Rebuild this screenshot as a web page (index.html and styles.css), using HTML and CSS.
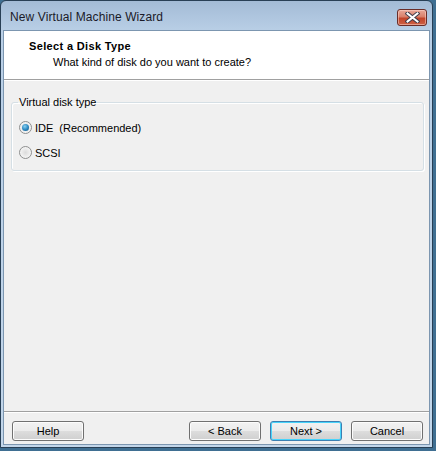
FILE: index.html
```html
<!DOCTYPE html>
<html>
<head>
<meta charset="utf-8">
<link rel="stylesheet" href="styles.css">
</head>
<body>
<div class="window">
  <div class="titlebar">
    <span class="title">New Virtual Machine Wizard</span>
    <div class="close">
      <svg width="15" height="11" viewBox="0 0 15 11">
        <path d="M2.5 1.5 L12.5 9.5 M12.5 1.5 L2.5 9.5" stroke="#3b3b4a" stroke-width="4" stroke-linecap="square"/>
        <path d="M2.5 1.5 L12.5 9.5 M12.5 1.5 L2.5 9.5" stroke="#ffffff" stroke-width="2" stroke-linecap="square"/>
      </svg>
    </div>
  </div>
  <div class="client">
    <div class="header">
      <div class="h-title">Select a Disk Type</div>
      <div class="h-sub">What kind of disk do you want to create?</div>
    </div>
    <div class="content">
      <fieldset class="group">
        <legend>Virtual disk type</legend>
        <label class="radio-row"><span class="radio checked"></span><span>IDE</span><span class="rec">(Recommended)</span></label>
        <label class="radio-row"><span class="radio"></span><span>SCSI</span></label>
      </fieldset>
    </div>
    <div class="footer">
      <button class="btn">Help</button>
      <div class="spacer"></div>
      <button class="btn">&lt; Back</button>
      <button class="btn default">Next &gt;</button>
      <button class="btn">Cancel</button>
    </div>
  </div>
</div>
</body>
</html>
```
FILE: styles.css
```css
html, body {
  margin: 0;
  padding: 0;
}
body {
  width: 436px;
  height: 451px;
  background: #3f6f92;
  font-family: "Liberation Sans", Arial, sans-serif;
  font-size: 11px;
  color: #000;
}
.window {
  box-sizing: border-box;
  width: 433px;
  height: 448px;
  border: 1px solid #283f55;
  border-radius: 6px 6px 0 0;
  background: linear-gradient(to bottom, #a3bbd6 0px, #b9cfe6 30px, #c2d6ea 100%);
  padding: 0 2px 2px 2px;
  display: flex;
  flex-direction: column;
}
.titlebar {
  height: 29px;
  display: flex;
  align-items: center;
  padding-left: 7px;
  padding-right: 3px;
  flex: none;
}
.title {
  font-family: "Liberation Sans", Arial, sans-serif;
  font-size: 12px;
  letter-spacing: 0.1px;
  color: #1a1a28;
  margin-top: 2px;
}
.close {
  margin-left: auto;
  width: 30px;
  height: 17px;
  margin-top: 4px;
  box-sizing: border-box;
  border: 1px solid #6a2d28;
  border-radius: 3px;
  background: linear-gradient(to bottom, #e8a899 0%, #d9806b 45%, #c2442a 55%, #cc6246 100%);
  box-shadow: inset 0 0 0 1px rgba(255,220,210,0.5);
  display: flex;
  align-items: center;
  justify-content: center;
}
.close svg { display: block; }
.client {
  flex: 1;
  border: 1px solid #7c96b0;
  background: #f0f0f0;
  display: flex;
  flex-direction: column;
}
.header {
  height: 49px;
  background: #ffffff;
  border-bottom: 1px solid #a0a0a0;
  box-shadow: 0 1px 0 #ffffff;
  padding: 9px 0 0 25px;
  box-sizing: border-box;
  flex: none;
}
.h-title {
  font-weight: bold;
  font-size: 11px;
  letter-spacing: 0.35px;
  line-height: 13px;
}
.h-sub {
  padding-left: 24px;
  margin-top: 3px;
  line-height: 13px;
}
.content {
  flex: 1;
  padding: 16px 5px 0 7px;
}
.group {
  margin: 0;
  border: 1px solid #d5dfe5;
  border-radius: 3px;
  padding: 6px 0 5px 7px;
  box-shadow: inset 1px 1px 0 #fff, 1px 1px 0 #fff;
}
.group legend {
  padding: 0 1px;
  margin-left: -1px;
  line-height: 13px;
}
.radio-row {
  display: flex;
  align-items: center;
  height: 25px;
}
.radio {
  width: 11px;
  height: 11px;
  border: 1px solid #8e8f8f;
  border-radius: 50%;
  background: radial-gradient(circle at 50% 50%, #dcdcdc 0%, #f4f4f4 70%, #fafafa 100%);
  margin-right: 3px;
  position: relative;
  flex: none;
}
.radio.checked::after {
  content: "";
  position: absolute;
  left: 2px;
  top: 2px;
  width: 7px;
  height: 7px;
  border-radius: 50%;
  background: radial-gradient(circle at 40% 35%, #8ad0f0 0%, #2f8cc4 50%, #0d4f7e 100%);
}
.rec {
  margin-left: 6px;
}
.footer {
  flex: none;
  border-top: 1px solid #a0a0a0;
  box-shadow: inset 0 1px 0 #fff;
  display: flex;
  padding: 9px 6px 3px 8px;
  gap: 9px;
}
.spacer { flex: 1; }
.btn {
  width: 72px;
  height: 20px;
  box-sizing: border-box;
  border: 1px solid #707070;
  border-radius: 3px;
  background: linear-gradient(to bottom, #f2f2f2 0%, #ebebeb 50%, #dddddd 51%, #cfcfcf 100%);
  box-shadow: inset 0 0 0 1px #fcfcfc;
  font-family: "Liberation Sans", Arial, sans-serif;
  font-size: 11px;
  color: #000;
  padding: 0;
}
.btn.default {
  border-color: #3c7fb1;
  box-shadow: inset 0 0 0 1px #48d4fb;
}
```
